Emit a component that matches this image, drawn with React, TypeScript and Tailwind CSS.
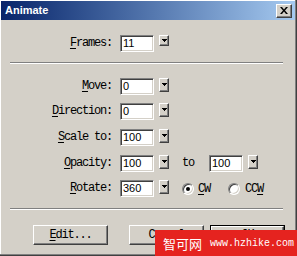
import React from 'react';

const mono = "font-['Liberation_Mono',monospace] text-[12px] tracking-[-1.2px] text-black";
const sans = "font-['Liberation_Sans',Arial,sans-serif] text-[11px] text-black";

function Field({ value }: { value: string }) {
  return (
    <div
      className={`w-[34px] h-[17px] bg-white border border-t-[#808080] border-l-[#808080] border-r-white border-b-white shadow-[inset_1px_1px_0_#404040,inset_-1px_-1px_0_#d4d0c8] pl-[2px] flex items-center leading-none ${sans}`}
    >
      {value}
    </div>
  );
}

function DropButton({ short = false }: { short?: boolean }) {
  return (
    <div
      className={`ml-[5px] w-[10px] ${short ? 'h-[11px]' : 'h-[14px]'} bg-[#d4d0c8] border border-t-white border-l-white border-r-[#404040] border-b-[#404040] shadow-[inset_-1px_-1px_0_#808080] flex items-center justify-center`}
    >
      <svg width="5" height="4" viewBox="0 0 5 4">
        <rect x="0" y="0" width="5" height="1" fill="#000" />
        <rect x="1" y="1" width="3" height="1" fill="#000" />
        <rect x="2" y="2" width="1" height="1" fill="#000" />
      </svg>
    </div>
  );
}

function Label({ first, rest }: { first: string; rest: string }) {
  return (
    <div className={`w-[112px] text-right leading-[17px] ${mono}`}>
      <span className="underline underline-offset-[2px]">{first}</span>
      {rest}
    </div>
  );
}

function Radio({ checked }: { checked?: boolean }) {
  return (
    <div className="w-[12px] h-[12px] rounded-full bg-white border border-t-[#808080] border-l-[#808080] border-r-white border-b-white shadow-[inset_1px_1px_0_#404040,inset_-1px_-1px_0_#d4d0c8] flex items-center justify-center">
      {checked && <div className="w-[4px] h-[4px] rounded-full bg-black" />}
    </div>
  );
}

function Separator({ className }: { className: string }) {
  return <div className={`ml-[10px] w-[273px] h-[2px] border-t border-t-[#808080] border-b border-b-white ${className}`} />;
}

function Button({ children, isDefault = false, className }: { children: React.ReactNode; isDefault?: boolean; className: string }) {
  const inner =
    'h-full w-full flex items-center justify-center bg-[#d4d0c8] border border-t-white border-l-white border-r-[#404040] border-b-[#404040] shadow-[inset_-1px_-1px_0_#808080]';
  return (
    <div className={`w-[75px] h-[20px] ${isDefault ? 'border border-black' : ''} ${className}`}>
      <div className={`${inner} ${mono}`}>{children}</div>
    </div>
  );
}

export default function App() {
  return (
    <div className="relative w-[297px] h-[256px] bg-[#d4d0c8] overflow-hidden shadow-[inset_-1px_-1px_0_#404040,inset_-2px_-2px_0_#808080,inset_1px_1px_0_#ffffff]">
      {/* title bar */}
      <div className="mt-[1px] ml-[1px] mr-[2px] h-[19px] bg-linear-to-r from-[#0a246a] to-[#a6caf0] flex items-center pl-[4px] pr-[3px]">
        <span className="font-['Liberation_Sans',Arial,sans-serif] text-[11px] font-bold text-white">Animate</span>
        <div className="ml-auto w-[16px] h-[14px] bg-[#d4d0c8] border border-t-white border-l-white border-r-[#404040] border-b-[#404040] shadow-[inset_-1px_-1px_0_#808080] flex items-center justify-center">
          <svg width="8" height="7" viewBox="0 0 8 7">
            <path d="M0 0h2l2 2.5L6 0h2L5 3.5 8 7H6L4 4.5 2 7H0l3-3.5z" fill="#000" />
          </svg>
        </div>
      </div>

      {/* frames */}
      <div className="mt-[15px] flex items-start h-[17px]">
        <Label first="F" rest="rames:" />
        <div className="ml-[8px]">
          <Field value="11" />
        </div>
        <DropButton short />
      </div>

      <Separator className="mt-[10px]" />

      <div className="mt-[14px] flex items-start h-[17px]">
        <Label first="M" rest="ove:" />
        <div className="ml-[8px]">
          <Field value="0" />
        </div>
        <DropButton />
      </div>

      <div className="mt-[8px] flex items-start h-[17px]">
        <Label first="D" rest="irection:" />
        <div className="ml-[8px]">
          <Field value="0" />
        </div>
        <DropButton />
      </div>

      <div className="mt-[9px] flex items-start h-[17px]">
        <Label first="S" rest="cale to:" />
        <div className="ml-[8px]">
          <Field value="100" />
        </div>
        <DropButton />
      </div>

      <div className="mt-[9px] flex items-start h-[17px]">
        <Label first="O" rest="pacity:" />
        <div className="ml-[8px]">
          <Field value="100" />
        </div>
        <DropButton />
        <div className={`ml-[13px] w-[27px] leading-[17px] ${mono}`}>to</div>
        <Field value="100" />
        <DropButton />
      </div>

      <div className="mt-[8px] flex items-start h-[17px]">
        <Label first="R" rest="otate:" />
        <div className="ml-[8px]">
          <Field value="360" />
        </div>
        <DropButton />
        <div className="ml-[13px] h-[17px] flex items-center">
          <Radio checked />
          <span className={`ml-[4px] ${mono}`}>
            <span className="underline underline-offset-[2px]">C</span>W
          </span>
          <div className="ml-[18px]">
            <Radio />
          </div>
          <span className={`ml-[5px] ${mono}`}>
            CC<span className="underline underline-offset-[2px]">W</span>
          </span>
        </div>
      </div>

      <Separator className="mt-[11px]" />

      <div className="mt-[15px] flex">
        <Button className="ml-[33px]">
          <span className="underline underline-offset-[2px]">E</span>dit...
        </Button>
        <Button className="ml-[21px]">Cancel</Button>
        <Button className="ml-[6px]" isDefault>
          OK
        </Button>
      </div>

      {/* watermark overlay */}
      <div className="absolute left-[155px] top-[230px] right-0 bottom-0 bg-[#e5231f] flex items-center pl-[8px]">
        <span className="font-['Noto_Sans_CJK_SC',sans-serif] text-[13px] leading-none text-white">智可网</span>
        <span className="ml-[8px] font-['Liberation_Mono',monospace] text-[10px] text-white">www.hzhike.com</span>
      </div>
    </div>
  );
}
